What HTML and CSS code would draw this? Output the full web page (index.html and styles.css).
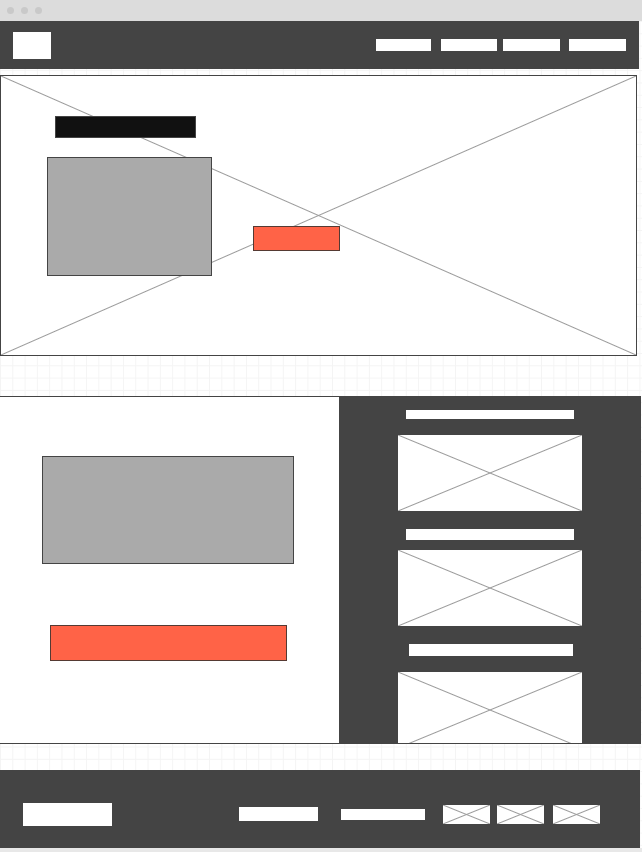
FILE: index.html
```html
<!DOCTYPE html>
<html lang="en">
<head>
<meta charset="utf-8">
<title>Wireframe</title>
<link rel="stylesheet" href="styles.css">
</head>
<body>
<div class="chrome">
  <span class="dot"></span><span class="dot"></span><span class="dot"></span>
</div>
<div class="page">
  <header class="header">
    <div class="logo"></div>
    <nav class="nav">
      <span class="nav-item n1"></span>
      <span class="nav-item n2"></span>
      <span class="nav-item n3"></span>
      <span class="nav-item n4"></span>
    </nav>
  </header>

  <section class="hero ph">
    <div class="hero-col">
      <div class="hero-title"></div>
      <div class="hero-media"></div>
    </div>
    <div class="hero-cta"></div>
  </section>

  <section class="split">
    <div class="split-main">
      <div class="main-media"></div>
      <div class="main-cta"></div>
    </div>
    <aside class="sidebar">
      <div class="side-title t1"></div>
      <div class="ph side-img i1"></div>
      <div class="side-title t2"></div>
      <div class="ph side-img i2"></div>
      <div class="side-title t3"></div>
      <div class="ph side-img i3"></div>
    </aside>
  </section>

  <footer class="footer">
    <div class="foot-logo"></div>
    <div class="foot-bar b1"></div>
    <div class="foot-bar b2"></div>
    <div class="ph foot-icon f1"></div>
    <div class="ph foot-icon f2"></div>
    <div class="ph foot-icon f3"></div>
  </footer>
</div>
</body>
</html>
```

FILE: styles.css
```css
* { box-sizing: border-box; }

html, body {
  margin: 0;
  padding: 0;
}

body {
  width: 642px;
  height: 852px;
  background: #e8e8e8;
  font-family: "Liberation Sans", Arial, sans-serif;
  overflow: hidden;
}

.chrome {
  height: 21px;
  background: #dcdcdc;
  display: flex;
  align-items: center;
  gap: 7px;
  padding-left: 7px;
}

.dot {
  width: 7px;
  height: 7px;
  border-radius: 50%;
  background: #c9c9c9;
}

.page {
  width: 642px;
  display: flex;
  flex-direction: column;
  background-color: #fff;
  background-image:
    linear-gradient(#f4f4f4 1px, transparent 1px),
    linear-gradient(90deg, #f4f4f4 1px, transparent 1px);
  background-size: 12.3px 12.3px;
}

/* placeholder X */
.ph {
  background-color: #fff;
  background-image:
    linear-gradient(to top right, transparent calc(50% - 1px), #9a9a9a 50%, transparent calc(50% + 1px)),
    linear-gradient(to bottom right, transparent calc(50% - 1px), #9a9a9a 50%, transparent calc(50% + 1px));
}

/* header */
.header {
  width: 639px;
  height: 48px;
  background: #444;
  display: flex;
  align-items: center;
  justify-content: space-between;
  padding: 0 13px;
}

.logo {
  width: 38px;
  height: 27px;
  background: #fff;
}

.nav {
  display: flex;
  align-items: center;
}

.nav-item {
  display: block;
  height: 12px;
  background: #fff;
}
.n1 { width: 55px; }
.n2 { width: 56px; margin-left: 10px; }
.n3 { width: 57px; margin-left: 6px; }
.n4 { width: 57px; margin-left: 9px; }

/* hero */
.hero {
  margin-top: 6px;
  width: 637px;
  height: 281px;
  border: 1px solid #444;
  display: flex;
  align-items: flex-start;
}

.hero-col {
  display: flex;
  flex-direction: column;
  padding-top: 40px;
  padding-left: 46px;
}

.hero-title {
  width: 141px;
  height: 22px;
  margin-left: 8px;
  background: #111;
  border: 1px solid #444;
}

.hero-media {
  margin-top: 19px;
  width: 165px;
  height: 119px;
  background: #aaa;
  border: 1px solid #444;
}

.hero-cta {
  margin-left: 41px;
  margin-top: 150px;
  width: 87px;
  height: 25px;
  background: #ff6347;
  border: 1px solid #553a33;
}

/* split */
.split {
  margin-top: 40px;
  width: 641px;
  height: 348px;
  border-top: 1px solid #444;
  border-bottom: 1px solid #444;
  display: flex;
}

.split-main {
  width: 339px;
  background: #fff;
  display: flex;
  flex-direction: column;
  align-items: flex-start;
  padding-top: 59px;
  padding-left: 42px;
}

.main-media {
  width: 252px;
  height: 108px;
  background: #aaa;
  border: 1px solid #444;
}

.main-cta {
  margin-top: 61px;
  margin-left: 8px;
  width: 237px;
  height: 36px;
  background: #ff6347;
  border: 1px solid #553a33;
}

.sidebar {
  flex: 1;
  background: #444;
  display: flex;
  flex-direction: column;
  align-items: center;
  padding-top: 13px;
  overflow: hidden;
}

.side-title {
  background: #fff;
  flex: none;
}
.t1 { width: 168px; height: 9px; }
.t2 { width: 168px; height: 11px; margin-top: 18px; }
.t3 { width: 164px; height: 12px; margin-top: 18px; margin-left: 1px; }

.side-img {
  width: 184px;
  height: 76px;
  flex: none;
}
.i1 { margin-top: 16px; }
.i2 { margin-top: 10px; }
.i3 { margin-top: 16px; }

/* footer */
.footer {
  margin-top: 26px;
  width: 640px;
  height: 78px;
  background: #444;
  display: flex;
  align-items: center;
  padding-top: 10px;
  padding-left: 23px;
}

.foot-logo {
  width: 89px;
  height: 23px;
  background: #fff;
}

.foot-bar {
  background: #fff;
}
.b1 { width: 79px; height: 14px; margin-left: 127px; }
.b2 { width: 84px; height: 11px; margin-left: 23px; }

.foot-icon {
  width: 47px;
  height: 19px;
}
.f1 { margin-left: 18px; }
.f2 { margin-left: 7px; }
.f3 { margin-left: 9px; }
```
